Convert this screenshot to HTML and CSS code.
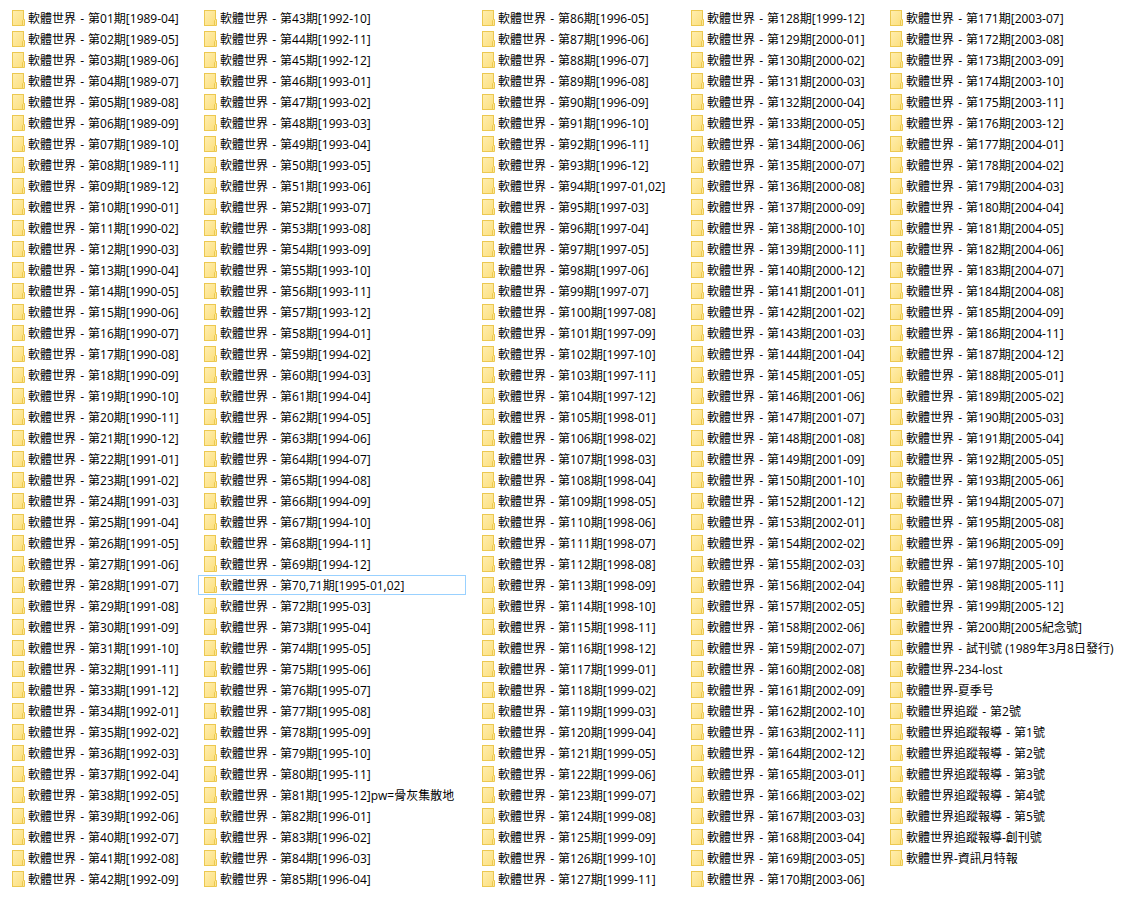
FILE: index.html
```html
<!DOCTYPE html>
<html lang="zh-Hant">
<head>
  <meta charset="UTF-8">
  <meta name="viewport" content="width=device-width, initial-scale=1.0">
  <title>軟體世界</title>
  <link rel="stylesheet" href="styles.css">
</head>
<body>
  <svg class="sprite" aria-hidden="true">
    <defs>
      <linearGradient id="paper" x1="0" y1="0" x2="1" y2="1">
        <stop offset="0" stop-color="#ffeeb0"/>
        <stop offset="1" stop-color="#fcdf7c"/>
      </linearGradient>
    </defs>
    <symbol id="folder" viewBox="0 0 14 16">
      <rect x="0.5" y="0.5" width="11" height="15" fill="url(#paper)" stroke="#ecc850"/>
      <path d="M10.5 15.5v-5l1-1h1v6z" fill="#fde795" stroke="#ecc850"/>
    </symbol>
  </svg>

  <ul class="files" id="files"></ul>

  <script src="files.js"></script>
</body>
</html>
```

FILE: styles.css
```css
body {
  margin: 0;
  background: #fff;
  color: #000;
  font-family: "Open Sans", "Noto Sans CJK TC", sans-serif;
  font-size: 12px;
}
.sprite {
  position: absolute;
  width: 0;
  height: 0;
}
.files {
  display: grid;
  grid-template-columns: 182fr 268fr 199fr 189fr 238fr;
  grid-template-rows: repeat(42, 21px);
  grid-auto-flow: column;
  column-gap: 10px;
  margin: 0;
  padding: 8px 0 8px 6px;
  list-style: none;
}
.file {
  display: flex;
  align-items: center;
  gap: 2px;
  box-sizing: border-box;
  height: 20px;
  padding: 0 5px;
  border: 1px solid transparent;
  color: inherit;
  line-height: 18px;
  text-decoration: none;
  white-space: nowrap;
}
.file:hover {
  background: #e5f3ff;
}
.file.focused {
  border-color: #99d1ff;
}
.icon {
  flex: none;
  width: 14px;
  height: 16px;
}
.name {
  padding-top: 2px;
}
.dash {
  margin: 0 1px;
}
```

FILE: files.js
```js
const list = document.getElementById('files');

function addFile(name) {
  const item = document.createElement('li');
  const link = document.createElement('a');
  link.className = 'file';
  link.href = '#';
  link.innerHTML = '<svg class="icon" aria-hidden="true"><use href="#folder"/></svg>' +
    '<span class="name">' + name.replace(' - ', ' <span class="dash">-</span> ') + '</span>';
  item.appendChild(link);
  list.appendChild(item);
  return link;
}

function pad(n) {
  return String(n).padStart(2, '0');
}

// monthly issues from..to, the first one dated year-month
function addIssues(from, to, year, month) {
  for (let n = from; n <= to; n++) {
    const note = n === 81 ? 'pw=骨灰集散地' : '';
    addFile('軟體世界 - 第' + pad(n) + '期[' + year + '-' + pad(month) + ']' + note);
    month++;
    if (month > 12) {
      month = 1;
      year++;
    }
  }
}

addIssues(1, 69, 1989, 4);
addFile('軟體世界 - 第70,71期[1995-01,02]').classList.add('focused');
addIssues(72, 93, 1995, 3);
addFile('軟體世界 - 第94期[1997-01,02]');
addIssues(95, 150, 1997, 3);
addIssues(152, 185, 2001, 12);
addIssues(186, 199, 2004, 11);

[
  '軟體世界 - 第200期[2005紀念號]',
  '軟體世界 - 試刊號 (1989年3月8日發行)',
  '軟體世界-234-lost',
  '軟體世界-夏季号',
  '軟體世界追蹤 - 第2號',
  '軟體世界追蹤報導 - 第1號',
  '軟體世界追蹤報導 - 第2號',
  '軟體世界追蹤報導 - 第3號',
  '軟體世界追蹤報導 - 第4號',
  '軟體世界追蹤報導 - 第5號',
  '軟體世界追蹤報導-創刊號',
  '軟體世界-資訊月特報'
].forEach(addFile);
```
